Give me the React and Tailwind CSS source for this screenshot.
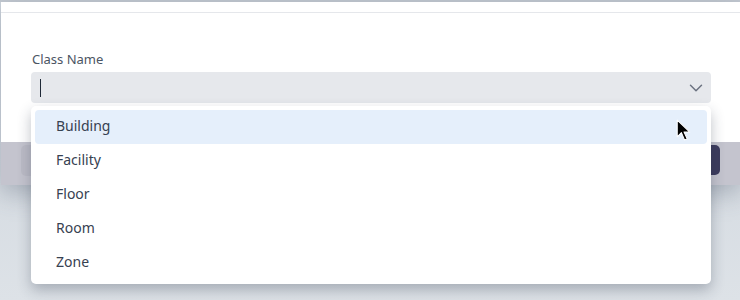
import React from "react";

const items = ["Building", "Facility", "Floor", "Room", "Zone"];

export default function App() {
  return (
    <div
      className="relative w-[740px] h-[300px] overflow-hidden bg-gradient-to-b from-[#cdd4dc] to-[#dde2e7]"
      style={{ fontFamily: '"Noto Sans", "Open Sans", sans-serif' }}
    >
      <div className="h-[2px] bg-[#c3c9d1]" />
      <div className="ml-[1px] bg-white shadow-[0_8px_24px_rgba(70,80,100,0.35)]">
        <div className="h-[11px] border-b border-[#e5e7eb]" />
        <div className="h-[129px] pl-[30px] pr-[29px] pt-[37px]">
          <div className="text-[13px] leading-[18px] text-[#4b5563] pl-[1px] mb-[4px]">Class Name</div>
          <div className="h-[31px] rounded-[4px] bg-[#e6e8ec] flex items-center pl-[9px] pr-[4px] justify-between">
            <div className="w-[1px] h-[18px] bg-[#1f2937]" />
            <svg width="22" height="22" viewBox="0 0 24 24" fill="none" stroke="#6b7280" strokeWidth="1.6" strokeLinecap="round" strokeLinejoin="round">
              <path d="m6 9 6 6 6-6" />
            </svg>
          </div>
        </div>
        <div className="h-[43px] bg-[#c4c4ce] flex justify-between items-start pt-[3px] px-[20px]">
          <div className="w-[90px] h-[31px] rounded-[5px] bg-[#bbbbc6]" />
          <div className="w-[90px] h-[30px] rounded-[5px] bg-[#3c3b5d]" />
        </div>
      </div>

      <div className="absolute left-[31px] top-[106px] w-[680px] rounded-[5px] bg-white p-[4px] shadow-[0_6px_14px_rgba(40,50,70,0.3)]">
        {items.map((it, i) => (
          <div
            key={it}
            className={
              i === 0
                ? "h-[34px] rounded-[4px] bg-[#e5effb] flex items-center pl-[21px] pb-[4px] text-[14px] text-[#374151]"
                : "h-[34px] rounded-[4px] flex items-center pl-[21px] pb-[4px] text-[14px] text-[#374151]"
            }
          >
            {it}
          </div>
        ))}
      </div>

      <svg className="absolute left-[676px] top-[119px]" width="15" height="23" viewBox="0 0 14 22">
        <path d="M1 1 L1 17 L5 13 L8 20 L10.5 19 L7.5 12.5 L13 12.5 Z" fill="#000" stroke="#fff" strokeWidth="1" strokeLinejoin="round" />
      </svg>
    </div>
  );
}
